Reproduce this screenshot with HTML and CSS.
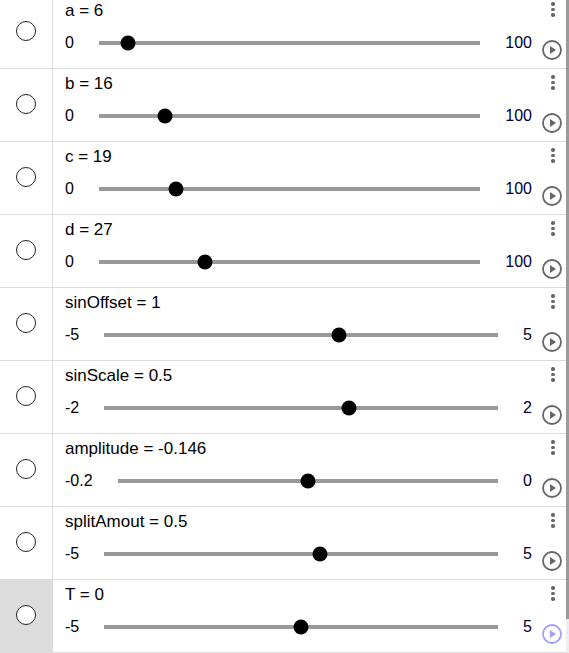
FILE: index.html
```html
<!DOCTYPE html>
<html lang="en">
<head>
  <meta charset="UTF-8" />
  <meta name="viewport" content="width=device-width, initial-scale=1.0"/>
  <title>Algebra</title>
  <link rel="stylesheet" href="styles.css">
</head>
<body>
  <div class="view">
    <div class="list">

      <div class="item">
        <div class="marble-col"><span class="marble"></span></div>
        <div class="main">
          <div class="label">a = 6</div>
          <div class="slider-line">
            <span class="min">0</span>
            <div class="track"><span class="knob" style="--v:0.06"></span></div>
            <span class="max">100</span>
          </div>
        </div>
        <div class="controls">
          <div class="dots"><i></i><i></i><i></i></div>
          <svg class="play" viewBox="0 0 20 20"><circle cx="10" cy="10" r="9" /><polygon points="8,6 8,14 14,10" /></svg>
        </div>
      </div>

      <div class="item">
        <div class="marble-col"><span class="marble"></span></div>
        <div class="main">
          <div class="label">b = 16</div>
          <div class="slider-line">
            <span class="min">0</span>
            <div class="track"><span class="knob" style="--v:0.16"></span></div>
            <span class="max">100</span>
          </div>
        </div>
        <div class="controls">
          <div class="dots"><i></i><i></i><i></i></div>
          <svg class="play" viewBox="0 0 20 20"><circle cx="10" cy="10" r="9" /><polygon points="8,6 8,14 14,10" /></svg>
        </div>
      </div>

      <div class="item">
        <div class="marble-col"><span class="marble"></span></div>
        <div class="main">
          <div class="label">c = 19</div>
          <div class="slider-line">
            <span class="min">0</span>
            <div class="track"><span class="knob" style="--v:0.19"></span></div>
            <span class="max">100</span>
          </div>
        </div>
        <div class="controls">
          <div class="dots"><i></i><i></i><i></i></div>
          <svg class="play" viewBox="0 0 20 20"><circle cx="10" cy="10" r="9" /><polygon points="8,6 8,14 14,10" /></svg>
        </div>
      </div>

      <div class="item">
        <div class="marble-col"><span class="marble"></span></div>
        <div class="main">
          <div class="label">d = 27</div>
          <div class="slider-line">
            <span class="min">0</span>
            <div class="track"><span class="knob" style="--v:0.27"></span></div>
            <span class="max">100</span>
          </div>
        </div>
        <div class="controls">
          <div class="dots"><i></i><i></i><i></i></div>
          <svg class="play" viewBox="0 0 20 20"><circle cx="10" cy="10" r="9" /><polygon points="8,6 8,14 14,10" /></svg>
        </div>
      </div>

      <div class="item">
        <div class="marble-col"><span class="marble"></span></div>
        <div class="main">
          <div class="label">sinOffset = 1</div>
          <div class="slider-line">
            <span class="min">-5</span>
            <div class="track"><span class="knob" style="--v:0.6"></span></div>
            <span class="max">5</span>
          </div>
        </div>
        <div class="controls">
          <div class="dots"><i></i><i></i><i></i></div>
          <svg class="play" viewBox="0 0 20 20"><circle cx="10" cy="10" r="9" /><polygon points="8,6 8,14 14,10" /></svg>
        </div>
      </div>

      <div class="item">
        <div class="marble-col"><span class="marble"></span></div>
        <div class="main">
          <div class="label">sinScale = 0.5</div>
          <div class="slider-line">
            <span class="min">-2</span>
            <div class="track"><span class="knob" style="--v:0.625"></span></div>
            <span class="max">2</span>
          </div>
        </div>
        <div class="controls">
          <div class="dots"><i></i><i></i><i></i></div>
          <svg class="play" viewBox="0 0 20 20"><circle cx="10" cy="10" r="9" /><polygon points="8,6 8,14 14,10" /></svg>
        </div>
      </div>

      <div class="item">
        <div class="marble-col"><span class="marble"></span></div>
        <div class="main">
          <div class="label">amplitude = -0.146</div>
          <div class="slider-line">
            <span class="min">-0.2</span>
            <div class="track"><span class="knob" style="--v:0.5"></span></div>
            <span class="max">0</span>
          </div>
        </div>
        <div class="controls">
          <div class="dots"><i></i><i></i><i></i></div>
          <svg class="play" viewBox="0 0 20 20"><circle cx="10" cy="10" r="9" /><polygon points="8,6 8,14 14,10" /></svg>
        </div>
      </div>

      <div class="item">
        <div class="marble-col"><span class="marble"></span></div>
        <div class="main">
          <div class="label">splitAmout = 0.5</div>
          <div class="slider-line">
            <span class="min">-5</span>
            <div class="track"><span class="knob" style="--v:0.55"></span></div>
            <span class="max">5</span>
          </div>
        </div>
        <div class="controls">
          <div class="dots"><i></i><i></i><i></i></div>
          <svg class="play" viewBox="0 0 20 20"><circle cx="10" cy="10" r="9" /><polygon points="8,6 8,14 14,10" /></svg>
        </div>
      </div>

      <div class="item selected">
        <div class="marble-col"><span class="marble"></span></div>
        <div class="main">
          <div class="label">T = 0</div>
          <div class="slider-line">
            <span class="min">-5</span>
            <div class="track"><span class="knob" style="--v:0.5"></span></div>
            <span class="max">5</span>
          </div>
        </div>
        <div class="controls">
          <div class="dots"><i></i><i></i><i></i></div>
          <svg class="play" viewBox="0 0 20 20"><circle cx="10" cy="10" r="9" /><polygon points="8,6 8,14 14,10" /></svg>
        </div>
      </div>

    </div>
    <div class="scrollbar"><div class="thumb"></div></div>
  </div>
</body>
</html>
```

FILE: styles.css
```css
html, body {
  margin: 0;
  padding: 0;
  height: 100%;
  overflow: hidden;
  background: #fff;
}
body {
  font-family: "Liberation Sans", Arial, sans-serif;
  color: #000;
}
.view {
  display: flex;
  height: 653px;
}
.list {
  flex: 1;
  margin-top: -4px;
}
.item {
  display: flex;
  height: 72px;
  border-bottom: 1px solid #dcdcdc;
}
.marble-col {
  width: 52px;
  border-right: 1px solid #dcdcdc;
  display: flex;
  align-items: center;
  justify-content: center;
}
.selected .marble-col {
  background-color: #dcdcdc;
}
.marble {
  width: 18px;
  height: 18px;
  border: 1.3px solid #222;
  border-radius: 50%;
  background: #fff;
  margin-bottom: 3px;
}
.main {
  flex: 1;
  padding-left: 12px;
  display: flex;
  flex-direction: column;
}
.label {
  font-size: 17px;
  padding-top: 5px;
  line-height: 19px;
}
.slider-line {
  display: flex;
  align-items: center;
  height: 20px;
  margin-top: 13px;
  font-size: 16px;
}
.track {
  flex: 1;
  height: 4px;
  margin: 0 25px;
  background-color: #999;
  position: relative;
}
.knob {
  position: absolute;
  top: 50%;
  left: calc(7.5px + var(--v) * (100% - 15px));
  width: 15px;
  height: 15px;
  border-radius: 50%;
  background-color: #000;
  transform: translate(-50%, -50%);
}
.max {
  color: #000033;
}
.controls {
  width: 34px;
  display: flex;
  flex-direction: column;
}
.dots {
  display: flex;
  flex-direction: column;
  align-items: center;
  gap: 2px;
  padding-top: 6px;
  margin-left: 13px;
  width: 16px;
}
.dots i {
  display: block;
  width: 3.5px;
  height: 3.5px;
  border-radius: 50%;
  background-color: #666;
}
.play {
  width: 20px;
  height: 20px;
  margin-top: auto;
  margin-bottom: 8px;
  margin-left: 10px;
}
.play circle {
  fill: none;
  stroke: #666;
  stroke-width: 1.8;
}
.play polygon {
  fill: #666;
}
.selected .play circle {
  stroke: #a29ef2;
}
.selected .play polygon {
  fill: #a29ef2;
}
.scrollbar {
  width: 3px;
  background-color: #eee;
}
.thumb {
  height: 619px;
  background-color: #9a9a9a;
}
```
